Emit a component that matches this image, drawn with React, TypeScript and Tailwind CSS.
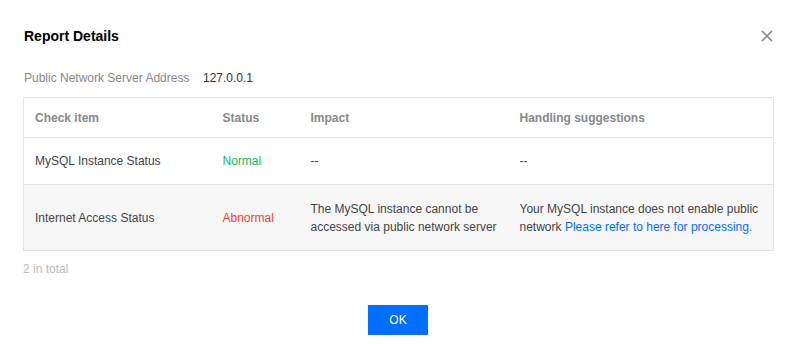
import React from 'react'

const rows = [
  {
    item: 'MySQL Instance Status',
    status: 'Normal',
    ok: true,
    impact: '--',
    suggestion: null as React.ReactNode,
  },
  {
    item: 'Internet Access Status',
    status: 'Abnormal',
    ok: false,
    impact: 'The MySQL instance cannot be accessed via public network server',
    suggestion: (
      <>
        Your MySQL instance does not enable public network{' '}
        <a href="#" className="text-[#006eff]">Please refer to here for processing.</a>
      </>
    ),
  },
]

export default function App() {
  return (
    <div className="w-[794px] h-[355px] bg-white pl-[23px] pr-[21px] pt-[26px] text-[12px] leading-[18px] text-[#444]" style={{ fontFamily: '"Liberation Sans", Arial, sans-serif' }}>
      <div className="flex items-center justify-between h-[20px]">
        <h2 className="text-[14px] leading-[20px] font-bold text-black pl-[1px]">Report Details</h2>
        <button className="w-[12px] h-[12px] flex items-center justify-center">
          <svg width="12" height="12" viewBox="0 0 12 12">
            <path d="M1 1 L11 11 M11 1 L1 11" stroke="#888" strokeWidth="1.6" />
          </svg>
        </button>
      </div>

      <div className="mt-[23px] flex pl-[1px]">
        <span className="w-[179px] text-[#888]">Public Network Server Address</span>
        <span className="text-[#333]">127.0.0.1</span>
      </div>

      <table className="mt-[10px] w-[750px] table-fixed border-collapse border border-[#e5e5e5]">
        <colgroup>
          <col className="w-[187px]" />
          <col className="w-[88px]" />
          <col className="w-[209px]" />
          <col className="w-[266px]" />
        </colgroup>
        <thead>
          <tr className="h-[40px] border-b border-[#e5e5e5]">
            <th className="pl-[11px] text-left font-bold text-[#888]">Check item</th>
            <th className="pl-[12px] text-left font-bold text-[#888]">Status</th>
            <th className="pl-[12px] text-left font-bold text-[#888]">Impact</th>
            <th className="pl-[12px] text-left font-bold text-[#888]">Handling suggestions</th>
          </tr>
        </thead>
        <tbody>
          {rows.map((r, i) => {
            const pad = i === 1 ? 'py-[14.5px]' : 'py-[14px]'
            return (
              <tr key={i} className={`border-b border-[#e5e5e5] ${i === 1 ? 'bg-[#f7f7f7]' : 'bg-white'}`}>
                <td className={`pl-[11px] pr-[12px] ${pad} align-middle`}>{r.item}</td>
                <td className={`pl-[12px] ${pad} align-middle ${r.ok ? 'text-[#0abf5b]' : 'text-[#e54545]'}`}>{r.status}</td>
                <td className={`pl-[12px] pr-[10px] ${pad} align-middle`}>{r.impact}</td>
                <td className={`pl-[12px] pr-[10px] ${pad} align-middle`}>{r.suggestion ?? '--'}</td>
              </tr>
            )
          })}
        </tbody>
      </table>

      <p className="mt-[9px] text-[#bbb]">2 in total</p>

      <div className="mt-[27px] flex justify-center">
        <button className="w-[60px] h-[30px] bg-[#006eff] text-white text-[12px]">OK</button>
      </div>
    </div>
  )
}
